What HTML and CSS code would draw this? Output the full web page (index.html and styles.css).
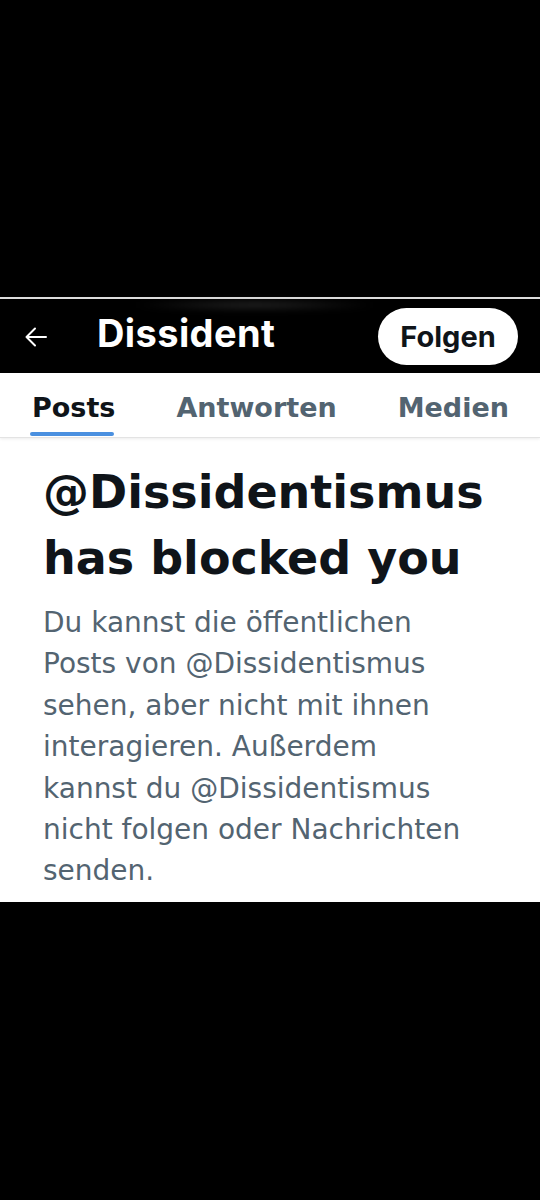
FILE: index.html
```html
<!DOCTYPE html>
<html lang="de">
<head>
<meta charset="utf-8">
<title>Dissident</title>
<link rel="stylesheet" href="styles.css">
</head>
<body>
<div class="screen">
  <div class="topspace"></div>
  <div class="rule"></div>
  <header class="header">
    <div class="glow"></div>
    <svg class="back" viewBox="0 0 22 20" width="22" height="20" aria-hidden="true">
      <path d="M21 10H1.5M10 1.5L1.5 10 10 18.5" fill="none" stroke="#fff" stroke-width="2" stroke-linecap="round" stroke-linejoin="round"/>
    </svg>
    <h1 class="title">Dissident</h1>
    <button class="follow">Folgen</button>
  </header>
  <nav class="tabs">
    <div class="tab active">Posts</div>
    <div class="tab">Antworten</div>
    <div class="tab">Medien</div>
  </nav>
  <main class="content">
    <h2 class="headline">@Dissidentismus has blocked you</h2>
    <p class="desc">Du kannst die öffentlichen Posts von @Dissidentismus sehen, aber nicht mit ihnen interagieren. Außerdem kannst du @Dissidentismus nicht folgen oder Nachrichten senden.</p>
  </main>
</div>
</body>
</html>
```

FILE: styles.css
```css
* { box-sizing: border-box; }
html, body { margin: 0; padding: 0; background: #000; }
body { font-family: "DejaVu Sans", "Liberation Sans", sans-serif; }
.screen { width: 540px; height: 1200px; background: #000; }
.topspace { height: 297px; }
.rule { height: 2px; background: #dcdcdc; }
.header {
  position: relative;
  height: 74px;
  background: #000;
  display: flex;
  align-items: center;
  padding: 0 22px 0 25px;
  font-family: "Inter", "Roboto", sans-serif;
}
.glow {
  position: absolute;
  left: 130px; top: 0;
  width: 250px; height: 12px;
  background: radial-gradient(ellipse at center, rgba(110,110,110,0.35), rgba(0,0,0,0) 70%);
  filter: blur(3px);
}
.back { flex: none; margin-top: 2px; }
.title {
  margin: 0 0 6px 50px;
  color: #fff;
  font-size: 38px;
  font-weight: 700;
  letter-spacing: 0.4px;
  flex: 1;
}
.follow {
  flex: none;
  height: 57px;
  width: 140px;
  border: none;
  border-radius: 29px;
  background: #fff;
  color: #0f1419;
  font-family: "Inter", "Roboto", sans-serif;
  font-size: 29px;
  font-weight: 700;
  padding: 0;
}
.tabs {
  height: 65px;
  background: #fff;
  display: flex;
  padding: 0 32px;
  gap: 61px;
  border-bottom: 1px solid #e3e3e3;
  box-shadow: 0 1px 3px rgba(0,0,0,0.08);
  position: relative;
}
.tab {
  position: relative;
  font-size: 27px;
  font-weight: 700;
  color: #536471;
  height: 64px;
  line-height: 70px;
}
.tab.active { color: #0f1419; }
.tab.active::after {
  content: "";
  position: absolute;
  left: -2px; right: 1px;
  bottom: 1px;
  height: 4px;
  border-radius: 2px;
  background: #4a90e0;
}
.content {
  background: #fff;
  padding: 21px 40px 10px 43px;
}
.headline {
  margin: 0;
  font-size: 46px;
  line-height: 66px;
  font-weight: 700;
  color: #0f1419;
}
.desc {
  margin: 11px 0 0;
  max-width: 430px;
  font-size: 28px;
  line-height: 41.4px;
  color: #536471;
  font-weight: 400;
}
```
